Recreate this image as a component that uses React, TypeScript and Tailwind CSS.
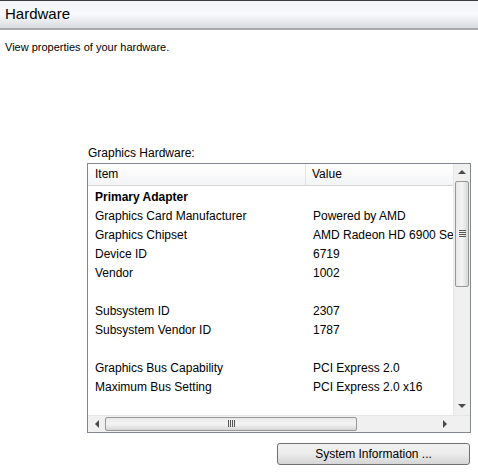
import React from "react";

const rows: [string, string, boolean?][] = [
  ["Primary Adapter", "", true],
  ["Graphics Card Manufacturer", "Powered by AMD"],
  ["Graphics Chipset", "AMD Radeon HD 6900 Series"],
  ["Device ID", "6719"],
  ["Vendor", "1002"],
  ["", ""],
  ["Subsystem ID", "2307"],
  ["Subsystem Vendor ID", "1787"],
  ["", ""],
  ["Graphics Bus Capability", "PCI Express 2.0"],
  ["Maximum Bus Setting", "PCI Express 2.0 x16"],
];

function Arrow({ dir }: { dir: "up" | "down" | "left" | "right" }) {
  const pts =
    dir === "up"
      ? "0,4 4,0 8,4"
      : dir === "down"
      ? "0,0 8,0 4,4"
      : dir === "left"
      ? "4,0 4,8 0,4"
      : "0,0 0,8 4,4";
  const w = dir === "up" || dir === "down" ? 8 : 4;
  const h = dir === "up" || dir === "down" ? 4 : 8;
  return (
    <svg width={w} height={h} viewBox={`0 0 ${w} ${h}`}>
      <polygon points={pts} fill="#4a4a4a" />
    </svg>
  );
}

export default function App() {
  return (
    <div
      className="w-[478px] h-[474px] bg-white text-[#1e1e1e] overflow-hidden flex flex-col"
      style={{ fontFamily: '"Liberation Sans", Arial, sans-serif' }}
    >
      <div className="h-[30px] border-t border-t-[#3c3c3c] border-b-2 border-b-[#a9a9ab] bg-gradient-to-b from-[#f3f5f8] via-[#f7f9fc] to-[#d9dbe0] flex items-center px-[5px]">
        <span className="text-[15px] text-black">Hardware</span>
      </div>
      <div className="text-[11px] text-black pl-[5px] pt-[9px]">View properties of your hardware.</div>
      <div className="ml-[88px] mt-[90px] text-[12px] text-black leading-[14px]">Graphics Hardware:</div>
      <div className="ml-[87px] mt-[3px] w-[384px] h-[270px] border border-[#828790] flex flex-col">
        <div className="flex flex-1 min-h-0">
          <div className="flex-1 flex flex-col min-w-0 overflow-hidden">
            <div className="h-[22px] flex bg-gradient-to-b from-white to-[#f3f4f6] border-b border-[#d5d5d5] text-[12px] text-black">
              <div className="w-[218px] pl-[7px] flex items-center border-r border-[#e3e4e6]">Item</div>
              <div className="flex-1 pl-[6px] flex items-center">Value</div>
            </div>
            <div className="pt-[2px]">
              {rows.map(([a, b, bold], i) => (
                <div key={i} className="h-[19px] flex items-center text-[12px] text-black whitespace-nowrap">
                  <div className={`w-[218px] pl-[7px] ${bold ? "font-bold" : ""}`}>{a}</div>
                  <div className="flex-1 pl-[7px] overflow-hidden">{b}</div>
                </div>
              ))}
            </div>
          </div>
          <div className="w-[17px] bg-[#f0f0f0] border-l border-[#e6e6e6] flex flex-col">
            <div className="h-[17px] flex items-center justify-center"><Arrow dir="up" /></div>
            <div className="mx-[1px] h-[106px] border border-[#979797] rounded-[2px] bg-gradient-to-r from-[#e8e8e8] via-[#f4f4f4] to-[#d6d6d6] flex items-center justify-center">
              <div className="flex flex-col gap-[1px]">
                <div className="w-[7px] h-px bg-[#555]" />
                <div className="w-[7px] h-px bg-[#555]" />
                <div className="w-[7px] h-px bg-[#555]" />
                <div className="w-[7px] h-px bg-[#555]" />
              </div>
            </div>
            <div className="flex-1" />
            <div className="h-[17px] flex items-center justify-center"><Arrow dir="down" /></div>
          </div>
        </div>
        <div className="h-[17px] flex bg-[#f0f0f0] border-t border-[#e6e6e6]">
          <div className="w-[17px] flex items-center justify-center"><Arrow dir="left" /></div>
          <div className="flex-1 flex py-[1px]">
            <div className="w-[252px] border border-[#979797] rounded-[2px] bg-gradient-to-b from-[#e8e8e8] via-[#f4f4f4] to-[#d6d6d6] flex items-center justify-center">
              <div className="flex gap-[1px]">
                <div className="w-px h-[7px] bg-[#555]" />
                <div className="w-px h-[7px] bg-[#555]" />
                <div className="w-px h-[7px] bg-[#555]" />
                <div className="w-px h-[7px] bg-[#555]" />
              </div>
            </div>
          </div>
          <div className="w-[17px] flex items-center justify-center"><Arrow dir="right" /></div>
          <div className="w-[17px] bg-[#f0f0f0]" />
        </div>
      </div>
      <div className="flex justify-end pr-[8px] mt-[10px]">
        <button className="w-[193px] h-[22px] border border-[#707070] rounded-[3px] bg-gradient-to-b from-[#f2f2f2] via-[#ebebeb] to-[#d5d5d5] text-[12px] text-black">
          System Information ...
        </button>
      </div>
    </div>
  );
}
